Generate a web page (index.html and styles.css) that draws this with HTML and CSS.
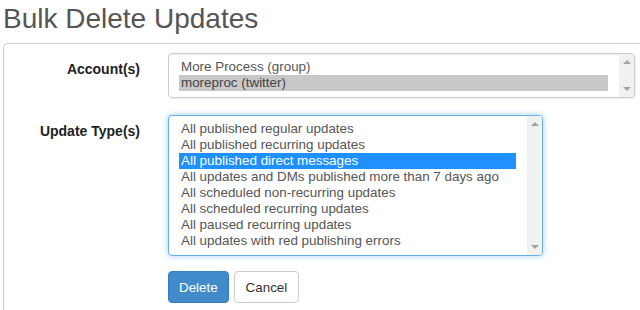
FILE: index.html
```
<!DOCTYPE html>
<html lang="en">
<head>
<meta charset="UTF-8">
<title>Bulk Delete Updates</title>
<link rel="stylesheet" href="styles.css">
</head>
<body>
<h1 class="page-title">Bulk Delete Updates</h1>
<div class="panel">
  <form class="form-horizontal">
    <div class="form-group">
      <label class="control-label">Account(s)</label>
      <div class="listbox listbox-accounts" role="listbox">
        <div class="options">
          <div class="option">More Process (group)</div>
          <div class="option selected">moreproc (twitter)</div>
        </div>
        <div class="scrollbar"><span class="arrow up"></span><span class="arrow down"></span></div>
      </div>
    </div>
    <div class="form-group">
      <label class="control-label">Update Type(s)</label>
      <div class="listbox listbox-types focus" role="listbox">
        <div class="options">
          <div class="option">All published regular updates</div>
          <div class="option">All published recurring updates</div>
          <div class="option active">All published direct messages</div>
          <div class="option">All updates and DMs published more than 7 days ago</div>
          <div class="option">All scheduled non-recurring updates</div>
          <div class="option">All scheduled recurring updates</div>
          <div class="option">All paused recurring updates</div>
          <div class="option">All updates with red publishing errors</div>
        </div>
        <div class="scrollbar"><span class="arrow up"></span><span class="arrow down"></span></div>
      </div>
    </div>
    <div class="form-actions">
      <button type="button" class="btn btn-primary">Delete</button>
      <button type="button" class="btn btn-default">Cancel</button>
    </div>
  </form>
</div>
</body>
</html>
```

FILE: styles.css
```
body {
  margin: 0;
  padding: 0 0 0 3px;
  font-family: "Liberation Sans", Arial, sans-serif;
  font-size: 14px;
  color: #333;
  background: #fff;
  overflow: hidden;
}
.page-title {
  font-size: 28px;
  font-weight: normal;
  color: #555;
  margin: 0;
  padding-top: 3px;
  line-height: 32px;
  height: 40px;
}
.panel {
  border: 1px solid #ccc;
  border-right: none;
  border-bottom: none;
  border-top-left-radius: 5px;
  padding: 9px 0 8px 0;
}
.form-group {
  display: flex;
  align-items: flex-start;
  margin-bottom: 17px;
}
.control-label {
  width: 136px;
  text-align: right;
  font-weight: bold;
  color: #222;
  padding-top: 6px;
  line-height: 20px;
  margin-right: 28px;
}
.listbox {
  display: flex;
  border: 1px solid #ccc;
  border-radius: 4px;
  box-shadow: inset 0 1px 1px rgba(0, 0, 0, .075), 1px 1px 2px rgba(0, 0, 0, .08);
  background: #fff;
  color: #555;
  font-size: 13.4px;
  overflow: hidden;
}
.listbox.focus {
  border-color: #66afe9;
  box-shadow: 0 0 6px rgba(102, 175, 233, .6);
}
.listbox-accounts {
  width: 465px;
  height: 43px;
}
.listbox-types {
  width: 373px;
  height: 139px;
}
.options {
  flex: 1;
  padding: 5px 11px 0 10px;
}
.option {
  line-height: 16px;
  height: 16px;
  padding-left: 2px;
  white-space: nowrap;
}
.option.selected {
  background: #c8c8c8;
  color: #444;
}
.option.active {
  background: #1e90ff;
  color: #fff;
}
.scrollbar {
  width: 15px;
  background: #f1f1f1;
  display: flex;
  flex-direction: column;
  justify-content: space-between;
  align-items: center;
  padding: 6px 0;
}
.arrow {
  width: 0;
  height: 0;
  border-left: 4px solid transparent;
  border-right: 4px solid transparent;
}
.arrow.up {
  border-bottom: 4px solid #a3a3a3;
}
.arrow.down {
  border-top: 4px solid #a3a3a3;
}
.form-actions {
  padding-left: 164px;
  margin-top: -2px;
  height: 32px;
}
.btn {
  font-family: inherit;
  font-size: 13.4px;
  height: 32px;
  padding: 0 10px;
  border-radius: 4px;
  border: 1px solid transparent;
  cursor: pointer;
  margin: 0 1px 0 0;
  vertical-align: top;
}
.btn-primary {
  background: #428bca;
  border-color: #357ebd;
  color: #fff;
}
.btn-default {
  background: #fff;
  border-color: #ccc;
  color: #333;
  padding: 0 11px;
}
```
